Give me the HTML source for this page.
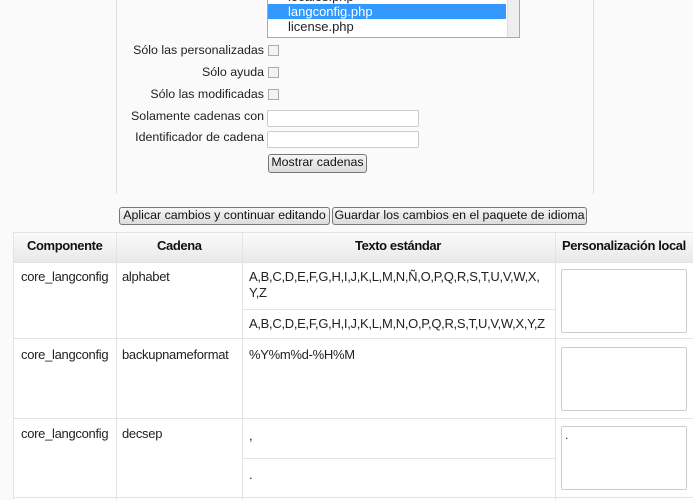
<!DOCTYPE html>
<html><head><meta charset="utf-8"><style>
*{box-sizing:border-box;margin:0;padding:0}
body{width:693px;height:500px;overflow:hidden;background:#fafafa;font-family:"Liberation Sans",Arial,sans-serif;font-size:12px;color:#222;position:relative}
.a{position:absolute;white-space:nowrap}
.lbl{position:absolute;right:429px;text-align:right;font-size:12.4px;color:#222}
.cb{position:absolute;left:268px;width:11px;height:11px;border:1px solid #aaa;background:#f3f3f3}
.inp{position:absolute;left:267px;width:152px;height:17px;border:1px solid #ccc;background:#fff;border-radius:2px}
.btn{position:absolute;border:1px solid #777;border-radius:3px;background:linear-gradient(#f6f6f6,#dcdcdc);font-size:12.4px;line-height:15px;text-align:center;color:#111;white-space:nowrap}
.vl{position:absolute;width:1px;background:#e3e3e3}
.hl{position:absolute;height:1px;background:#e3e3e3}
.ta{position:absolute;left:561px;width:126px;height:64px;border:1px solid #ccc;background:#fff;border-radius:2px}
.t{position:absolute;font-size:13px;color:#222;white-space:nowrap;letter-spacing:-0.3px}
.h{position:absolute;font-weight:bold;font-size:13px;color:#111;top:238px;letter-spacing:-0.4px}
</style></head><body>
<div class="vl" style="left:116px;top:0;height:194px;background:#ddd"></div>
<div class="vl" style="left:593px;top:0;height:194px;background:#ddd"></div>
<div class="a" style="left:267px;top:0;width:253px;height:38px;border:1px solid #aaa;border-top:none;background:#fff;overflow:hidden;font-size:13px">
 <div class="a" style="left:0;top:-11px;width:238px;height:15px;padding-left:20px;line-height:15px">locales.php</div>
 <div class="a" style="left:0;top:4px;width:238px;height:15px;background:#3399ff;color:#fff;padding-left:20px;line-height:15px">langconfig.php</div>
 <div class="a" style="left:0;top:19px;width:238px;height:15px;padding-left:20px;line-height:15px">license.php</div>
 <div class="a" style="left:239px;top:0;width:13px;height:38px;background:#eee;border-left:1px solid #ddd"></div>
</div>
<div class="lbl" style="top:43px">Sólo las personalizadas</div><div class="cb" style="top:45px"></div>
<div class="lbl" style="top:65px">Sólo ayuda</div><div class="cb" style="top:67px"></div>
<div class="lbl" style="top:87px">Sólo las modificadas</div><div class="cb" style="top:89px"></div>
<div class="lbl" style="top:109px">Solamente cadenas con</div><div class="inp" style="top:110px"></div>
<div class="lbl" style="top:130px">Identificador de cadena</div><div class="inp" style="top:131px"></div>
<div class="btn" style="left:268px;top:154px;width:99px;height:19px">Mostrar cadenas</div>
<div class="btn" style="left:119px;top:207px;width:211px;height:18px">Aplicar cambios y continuar editando</div>
<div class="btn" style="left:332px;top:207px;width:255px;height:18px">Guardar los cambios en el paquete de idioma</div>
<div class="a" style="left:13px;top:232px;width:680px;height:268px;background:#fff;border-top:1px solid #e3e3e3;border-left:1px solid #e3e3e3"></div>
<div class="a" style="left:14px;top:233px;width:679px;height:29px;background:linear-gradient(#fafafa,#e9e9e9)"></div>
<div class="hl" style="left:13px;top:262px;width:680px"></div>
<div class="hl" style="left:13px;top:338px;width:680px"></div>
<div class="hl" style="left:13px;top:418px;width:680px"></div>
<div class="hl" style="left:13px;top:497px;width:680px"></div>
<div class="hl" style="left:242px;top:309px;width:313px"></div>
<div class="hl" style="left:242px;top:458px;width:313px"></div>
<div class="vl" style="left:116px;top:232px;height:268px"></div>
<div class="vl" style="left:242px;top:232px;height:268px"></div>
<div class="vl" style="left:555px;top:232px;height:268px"></div>
<div class="h" style="left:27px">Componente</div>
<div class="h" style="left:157px">Cadena</div>
<div class="h" style="left:355px">Texto estándar</div>
<div class="h" style="left:562px">Personalización local</div>
<div class="t" style="left:21px;top:269px">core_langconfig</div>
<div class="t" style="left:122px;top:269px">alphabet</div>
<div class="t" style="left:249px;top:269px;line-height:16px">A,B,C,D,E,F,G,H,I,J,K,L,M,N,Ñ,O,P,Q,R,S,T,U,V,W,X,<br>Y,Z</div>
<div class="t" style="left:249px;top:316px">A,B,C,D,E,F,G,H,I,J,K,L,M,N,O,P,Q,R,S,T,U,V,W,X,Y,Z</div>
<div class="ta" style="top:269px"></div>
<div class="t" style="left:21px;top:347px">core_langconfig</div>
<div class="t" style="left:122px;top:347px">backupnameformat</div>
<div class="t" style="left:249px;top:347px">%Y%m%d-%H%M</div>
<div class="ta" style="top:347px"></div>
<div class="t" style="left:21px;top:426px">core_langconfig</div>
<div class="t" style="left:122px;top:426px">decsep</div>
<div class="t" style="left:249px;top:428px">,</div>
<div class="t" style="left:249px;top:467px">.</div>
<div class="ta" style="top:426px"><span class="a" style="left:3px;top:1px">.</span></div>
</body></html>
